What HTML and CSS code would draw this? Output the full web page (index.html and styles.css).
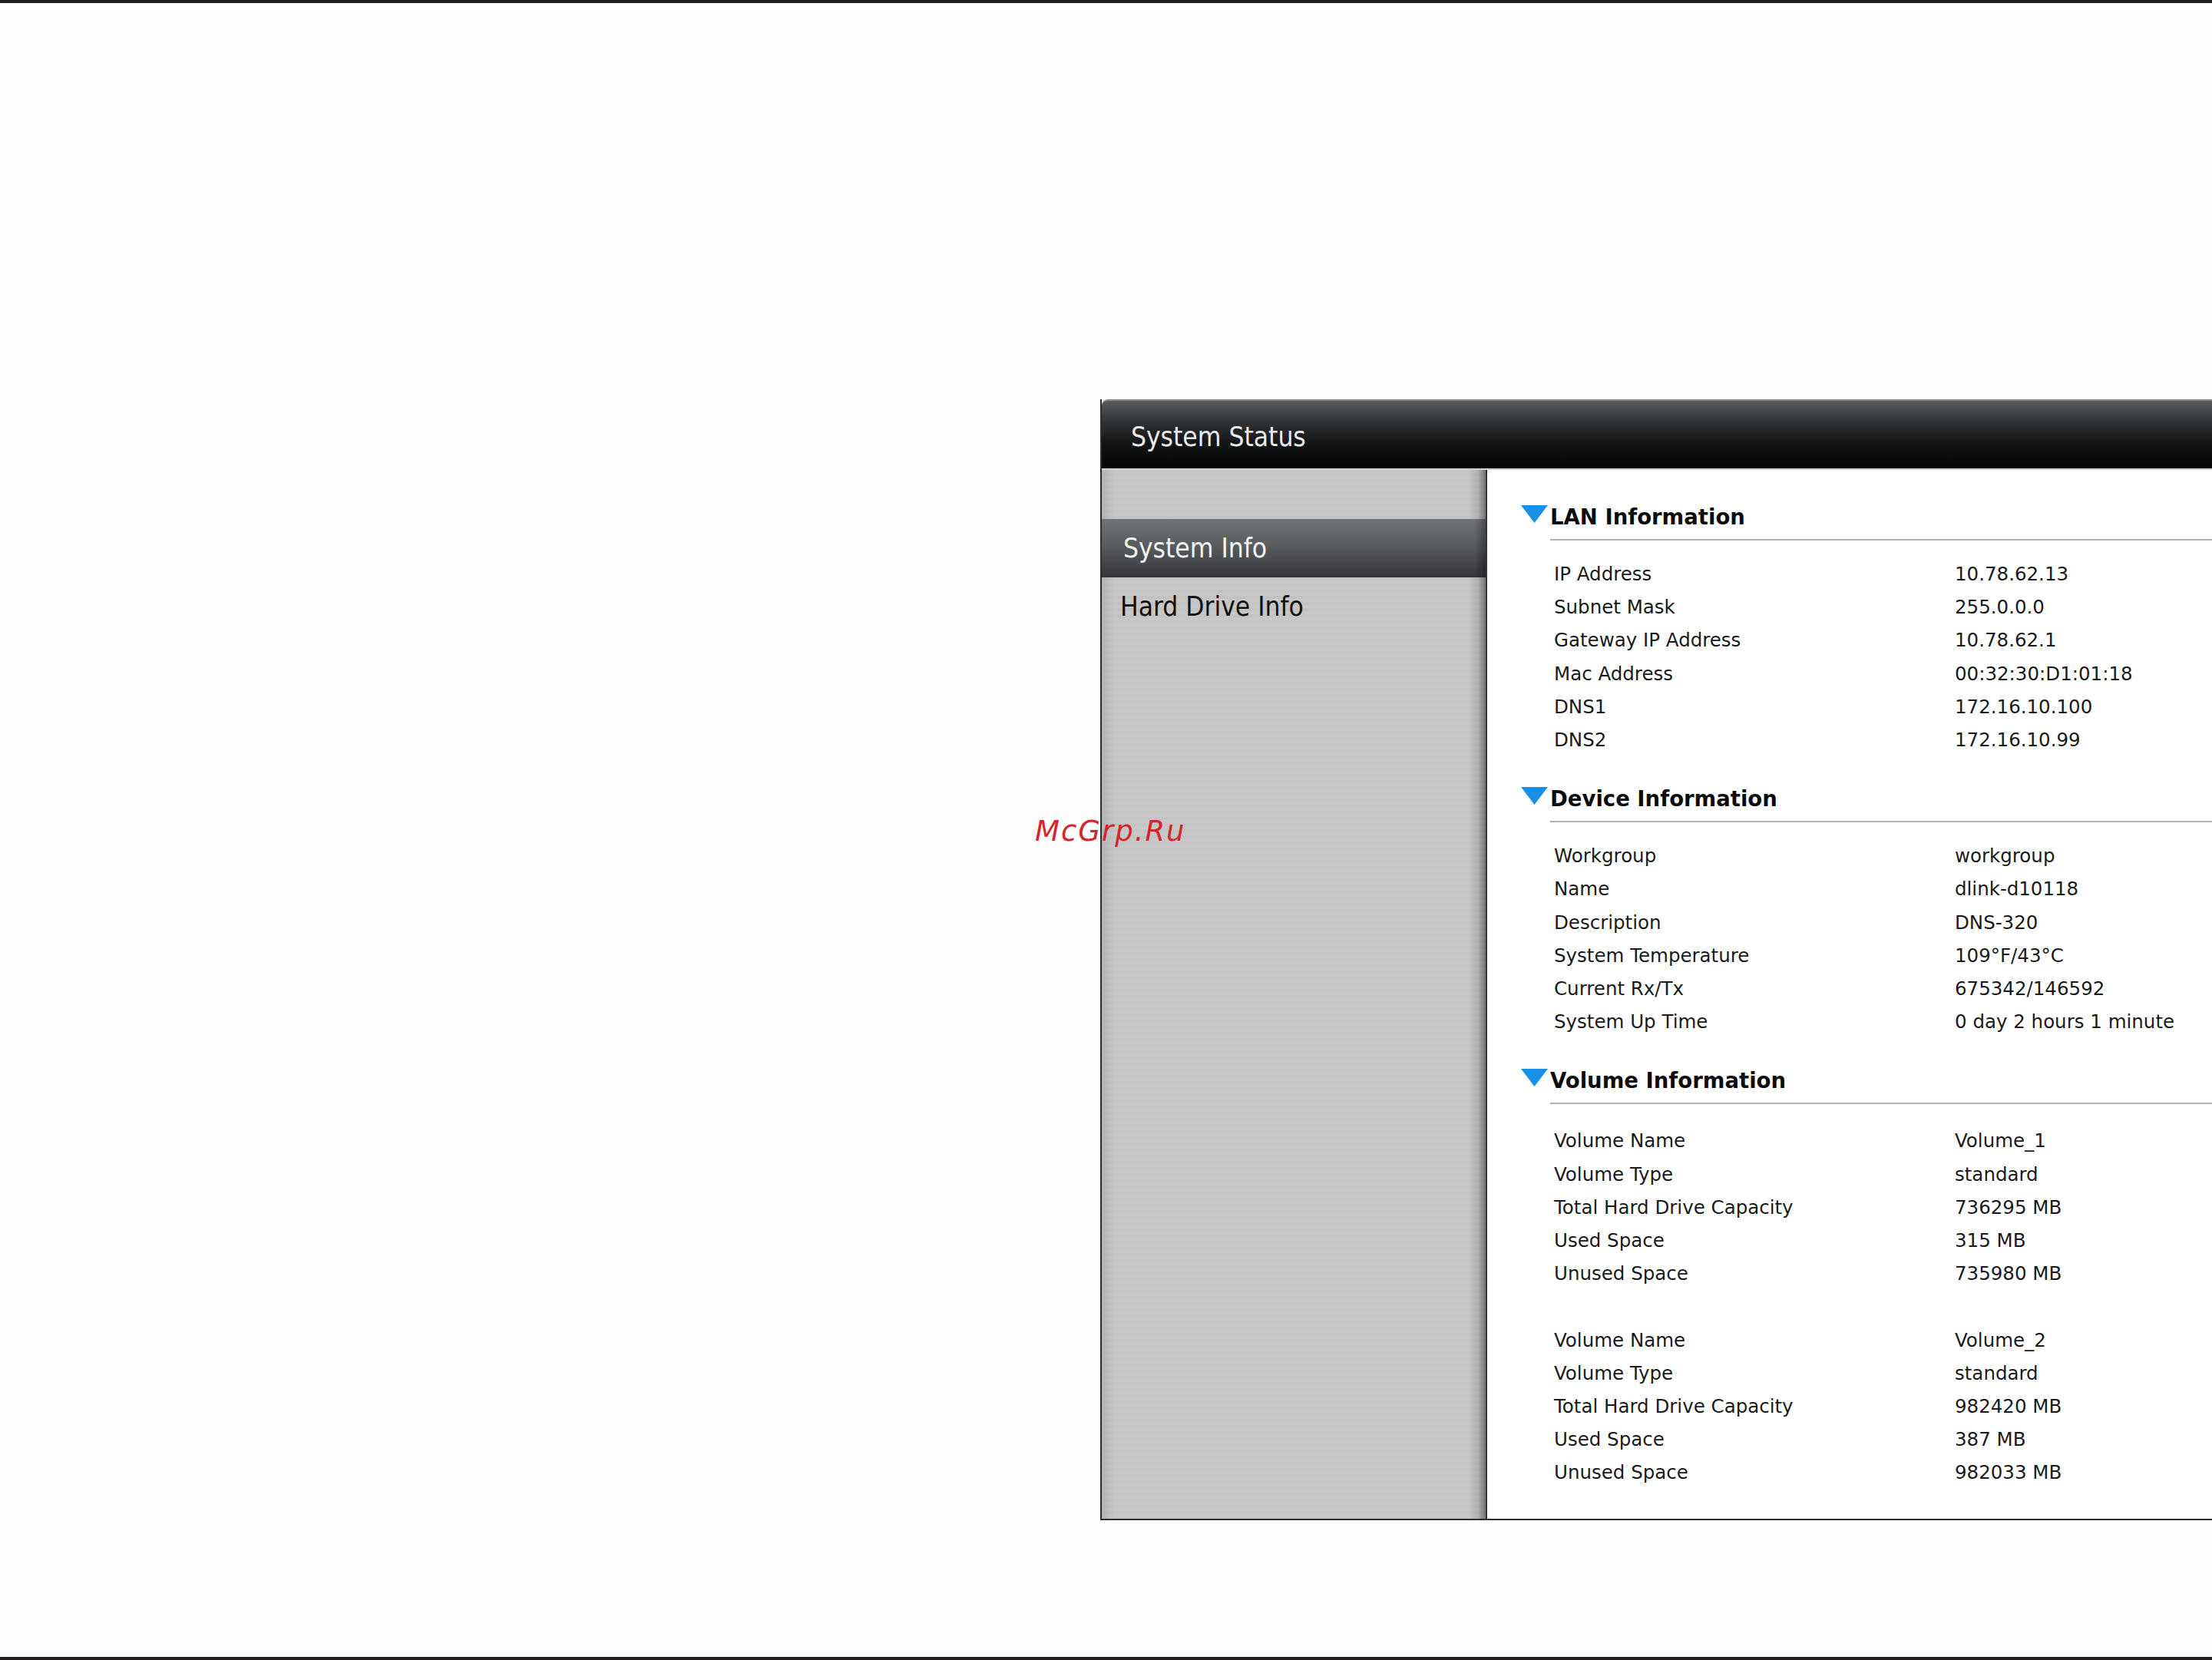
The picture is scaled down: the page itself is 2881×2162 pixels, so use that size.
FILE: index.html
```html
<!DOCTYPE html>
<html lang="en">
<head>
<meta charset="utf-8">
<title>System Status</title>
<link rel="stylesheet" href="styles.css">
</head>
<body>
<div class="page">
  <div class="rule"></div>
  <div class="stage">
    <div class="panel">
      <div class="panel-head">System Status</div>
      <div class="panel-body">
        <nav class="sidebar">
          <div class="side-spacer"></div>
          <div class="side-item active">System Info</div>
          <div class="side-item">Hard Drive Info</div>
        </nav>
        <main class="content">
          <section class="section">
            <div class="section-head">
              <svg class="tri" viewBox="0 0 35 23" width="35" height="23"><polygon points="0,0 35,0 17.5,23" fill="#1890e8"/></svg>
              <h2 class="title">LAN Information</h2>
            </div>
            <div class="rows">
              <span class="lbl">IP Address</span><span class="val">10.78.62.13</span>
              <span class="lbl">Subnet Mask</span><span class="val">255.0.0.0</span>
              <span class="lbl">Gateway IP Address</span><span class="val">10.78.62.1</span>
              <span class="lbl">Mac Address</span><span class="val">00:32:30:D1:01:18</span>
              <span class="lbl">DNS1</span><span class="val">172.16.10.100</span>
              <span class="lbl">DNS2</span><span class="val">172.16.10.99</span>
            </div>
          </section>
          <section class="section">
            <div class="section-head">
              <svg class="tri" viewBox="0 0 35 23" width="35" height="23"><polygon points="0,0 35,0 17.5,23" fill="#1890e8"/></svg>
              <h2 class="title">Device Information</h2>
            </div>
            <div class="rows">
              <span class="lbl">Workgroup</span><span class="val">workgroup</span>
              <span class="lbl">Name</span><span class="val">dlink-d10118</span>
              <span class="lbl">Description</span><span class="val">DNS-320</span>
              <span class="lbl">System Temperature</span><span class="val">109°F/43°C</span>
              <span class="lbl">Current Rx/Tx</span><span class="val">675342/146592</span>
              <span class="lbl">System Up Time</span><span class="val">0 day 2 hours 1 minute</span>
            </div>
          </section>
          <section class="section">
            <div class="section-head">
              <svg class="tri" viewBox="0 0 35 23" width="35" height="23"><polygon points="0,0 35,0 17.5,23" fill="#1890e8"/></svg>
              <h2 class="title">Volume Information</h2>
            </div>
            <div class="rows rows-volume">
              <span class="lbl">Volume Name</span><span class="val">Volume_1</span>
              <span class="lbl">Volume Type</span><span class="val">standard</span>
              <span class="lbl">Total Hard Drive Capacity</span><span class="val">736295 MB</span>
              <span class="lbl">Used Space</span><span class="val">315 MB</span>
              <span class="lbl">Unused Space</span><span class="val">735980 MB</span>
              <span class="gap"></span>
              <span class="lbl">Volume Name</span><span class="val">Volume_2</span>
              <span class="lbl">Volume Type</span><span class="val">standard</span>
              <span class="lbl">Total Hard Drive Capacity</span><span class="val">982420 MB</span>
              <span class="lbl">Used Space</span><span class="val">387 MB</span>
              <span class="lbl">Unused Space</span><span class="val">982033 MB</span>
            </div>
          </section>
        </main>
      </div>
    </div>
    <div class="watermark">McGrp.Ru</div>
  </div>
  <div class="rule"></div>
</div>
</body>
</html>
```

FILE: styles.css
```css
html, body {
  margin: 0;
  padding: 0;
  background: #fefefe;
}

.page {
  display: flex;
  flex-direction: column;
  min-height: 100vh;
  overflow: hidden;
}

.rule {
  height: 4px;
  background: #231f20;
  flex: none;
}

.stage {
  flex: 1;
  position: relative;
  padding: 516px 0 0 1433px;
}

.panel {
  width: 1448px;
  border-left: 2px solid #2e2e2e;
  border-bottom: 2px solid #2e2e2e;
  box-sizing: border-box;
}

.panel-head {
  height: 82px;
  padding: 6px 0 0 38px;
  line-height: 82px;
  border-top: 2px solid #8a8d90;
  border-bottom: 2px solid #d2d2d2;
  border-top-left-radius: 8px;
  background: linear-gradient(#575c5f 0%, #2f3234 32%, #111213 65%, #060606 100%);
  color: #ececec;
  font-family: "DejaVu Sans Condensed", "DejaVu Sans", sans-serif;
  font-stretch: condensed;
  font-size: 35px;
}

.panel-body {
  display: flex;
  height: 1366px;
}

.sidebar {
  width: 500px;
  flex: none;
  border-right: 2px solid #333;
  background:
    linear-gradient(to right, rgba(150, 156, 164, 0.45) 0, rgba(160, 160, 160, 0) 16px, rgba(0, 0, 0, 0) calc(100% - 22px), rgba(0, 0, 0, 0.1) calc(100% - 10px), rgba(0, 0, 0, 0.42) 100%),
    repeating-linear-gradient(to bottom, #c7c7c7 0, #c7c7c7 4px, #c3c3c3 4px, #c3c3c3 8px);
  font-family: "DejaVu Sans Condensed", "DejaVu Sans", sans-serif;
  font-stretch: condensed;
  font-size: 35px;
}

.side-spacer {
  height: 64px;
}

.side-item {
  height: 76px;
  line-height: 76px;
  padding-left: 24px;
  color: #111;
}

.side-item.active {
  padding-left: 28px;
  color: #f4f4f4;
  background:
    linear-gradient(to right, rgba(0, 0, 0, 0) calc(100% - 14px), rgba(0, 0, 0, 0.35) 100%),
    linear-gradient(#717477 0%, #5a5d60 45%, #3e4043 85%, #34363a 100%);
}

.content {
  flex: 1;
  background: #fff;
  padding: 41px 0 0 44px;
  font-family: "DejaVu Sans", sans-serif;
  color: #1a1a1a;
}

.section + .section {
  margin-top: 35px;
}

.section-head {
  display: flex;
  align-items: flex-start;
}

.tri {
  flex: none;
  margin: 5px 3px 0 0;
  display: block;
}

.title {
  flex: 1;
  margin: 0;
  padding-bottom: 9px;
  border-bottom: 2px solid #b2b2b2;
  font-size: 27.5px;
  font-weight: bold;
  line-height: 40px;
  color: #0c0c0c;
}

.rows {
  display: grid;
  grid-template-columns: 522px 1fr;
  margin: 22px 0 0 38px;
  padding-left: 5px;
  font-size: 24.5px;
  line-height: 43.2px;
}

.rows-volume {
  margin-top: 26px;
}

.lbl, .val {
  white-space: nowrap;
}

.gap {
  grid-column: 1 / -1;
  height: 43.2px;
}

.watermark {
  position: absolute;
  left: 1348px;
  top: 1060px;
  font-family: "DejaVu Sans", sans-serif;
  font-style: italic;
  font-size: 37px;
  line-height: 37px;
  letter-spacing: 2px;
  color: #d3262b;
}
```
